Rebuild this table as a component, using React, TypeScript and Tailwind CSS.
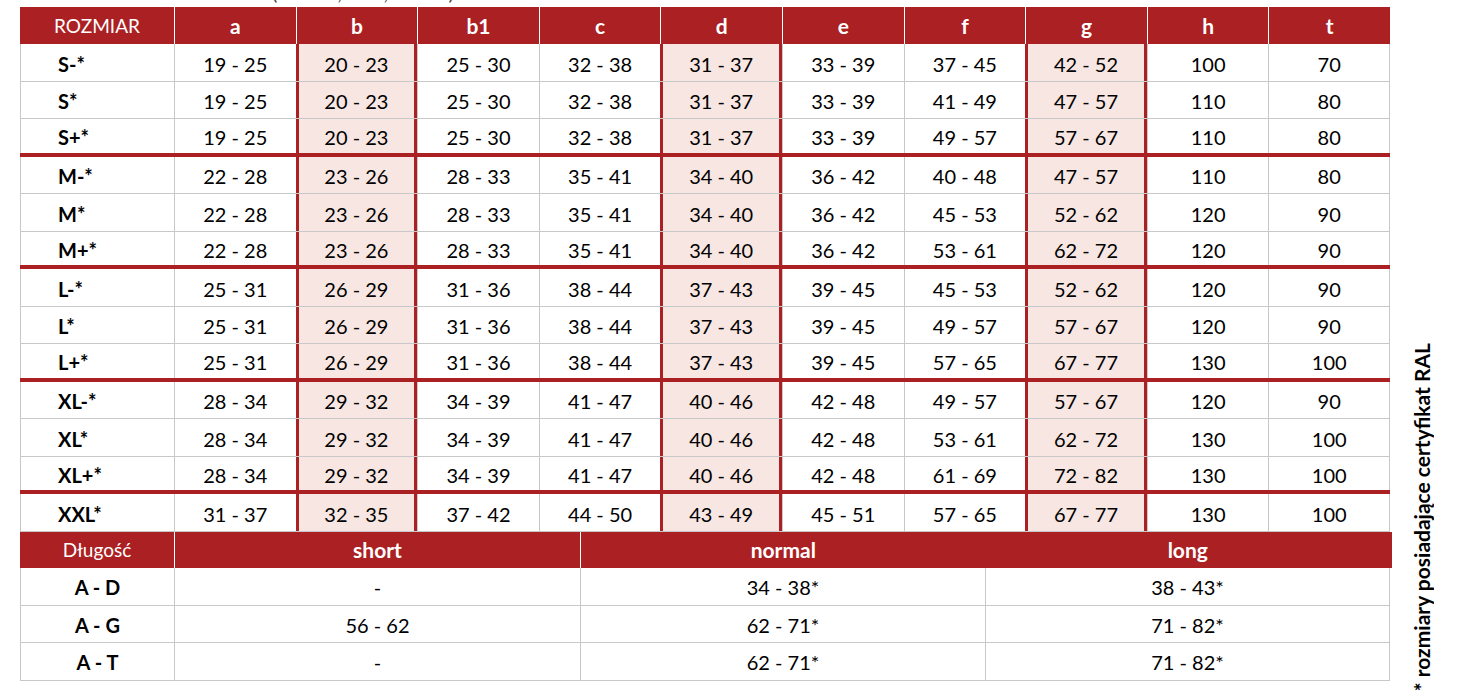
import React from 'react';

const rows: { label: string; v: string[]; end?: boolean }[] = [
  { label: 'S-*', v: ['19 - 25', '20 - 23', '25 - 30', '32 - 38', '31 - 37', '33 - 39', '37 - 45', '42 - 52', '100', '70'] },
  { label: 'S*', v: ['19 - 25', '20 - 23', '25 - 30', '32 - 38', '31 - 37', '33 - 39', '41 - 49', '47 - 57', '110', '80'] },
  { label: 'S+*', v: ['19 - 25', '20 - 23', '25 - 30', '32 - 38', '31 - 37', '33 - 39', '49 - 57', '57 - 67', '110', '80'], end: true },
  { label: 'M-*', v: ['22 - 28', '23 - 26', '28 - 33', '35 - 41', '34 - 40', '36 - 42', '40 - 48', '47 - 57', '110', '80'] },
  { label: 'M*', v: ['22 - 28', '23 - 26', '28 - 33', '35 - 41', '34 - 40', '36 - 42', '45 - 53', '52 - 62', '120', '90'] },
  { label: 'M+*', v: ['22 - 28', '23 - 26', '28 - 33', '35 - 41', '34 - 40', '36 - 42', '53 - 61', '62 - 72', '120', '90'], end: true },
  { label: 'L-*', v: ['25 - 31', '26 - 29', '31 - 36', '38 - 44', '37 - 43', '39 - 45', '45 - 53', '52 - 62', '120', '90'] },
  { label: 'L*', v: ['25 - 31', '26 - 29', '31 - 36', '38 - 44', '37 - 43', '39 - 45', '49 - 57', '57 - 67', '120', '90'] },
  { label: 'L+*', v: ['25 - 31', '26 - 29', '31 - 36', '38 - 44', '37 - 43', '39 - 45', '57 - 65', '67 - 77', '130', '100'], end: true },
  { label: 'XL-*', v: ['28 - 34', '29 - 32', '34 - 39', '41 - 47', '40 - 46', '42 - 48', '49 - 57', '57 - 67', '120', '90'] },
  { label: 'XL*', v: ['28 - 34', '29 - 32', '34 - 39', '41 - 47', '40 - 46', '42 - 48', '53 - 61', '62 - 72', '130', '100'] },
  { label: 'XL+*', v: ['28 - 34', '29 - 32', '34 - 39', '41 - 47', '40 - 46', '42 - 48', '61 - 69', '72 - 82', '130', '100'], end: true },
  { label: 'XXL*', v: ['31 - 37', '32 - 35', '37 - 42', '44 - 50', '43 - 49', '45 - 51', '57 - 65', '67 - 77', '130', '100'] },
];

const heads = ['a', 'b', 'b1', 'c', 'd', 'e', 'f', 'g', 'h', 't'];
// columns b, d, g are framed in red
const marked = [1, 4, 7];

const lengths = [
  { label: 'A - D', v: ['-', '34 - 38*', '38 - 43*'] },
  { label: 'A - G', v: ['56 - 62', '62 - 71*', '71 - 82*'] },
  { label: 'A - T', v: ['-', '62 - 71*', '71 - 82*'] },
];

const cols = 'grid grid-cols-[154px_repeat(10,minmax(0,1fr))]';

export default function App() {
  return (
    <div className="w-[1462px] h-[698px] bg-white flex [font-family:Lato,sans-serif] text-black overflow-hidden">
      <div className="w-[1392px] pl-[20px] flex flex-col">
        {/* cut-off caption above the table */}
        <div className="h-[7px] overflow-hidden pl-[252px]">
          <div className="text-[20px] leading-[24px] -mt-[20px] text-[#444]">(obwód, talia, biodra)</div>
        </div>

        {/* size table header */}
        <div className={`${cols} w-[1370px] h-[37px] bg-[#ab2023] text-white`}>
          <div className="flex items-center justify-center pt-[1px] text-[19px]">ROZMIAR</div>
          {heads.map(h => (
            <div key={h} className="flex items-center justify-center pt-[1px] border-l border-white text-[21px] font-bold">
              {h}
            </div>
          ))}
        </div>

        {/* size rows */}
        {rows.map(r => (
          <div
            key={r.label}
            className={`${cols} w-[1370px] h-[37.5px] ${r.end ? 'border-b-4 border-[#ab2023]' : 'border-b border-[#c8c8c8]'}`}
          >
            <div className="flex items-center pt-[3px] pl-[37px] border-l border-[#c8c8c8] text-[20px] font-bold">{r.label}</div>
            {r.v.map((val, i) => (
              <div
                key={i}
                className={`flex items-center justify-center pt-[3px] text-[20px] ${
                  marked.includes(i)
                    ? 'bg-[#f7e6e2] border-x-[3px] border-[#ab2023]'
                    : 'border-l border-[#c8c8c8]'
                } ${i === 9 ? 'border-r' : ''}`}
              >
                {val}
              </div>
            ))}
          </div>
        ))}

        {/* length table */}
        <div className="grid grid-cols-[154px_406px_405px_405px] w-[1372px] h-[36px] bg-[#ab2023] text-white mt-[0.5px]">
          <div className="flex items-center justify-center text-[19px]">Długość</div>
          <div className="flex items-center justify-center border-l border-white text-[21px] font-bold">short</div>
          <div className="col-span-2 grid grid-cols-2 border-l border-white text-[21px] font-bold">
            <div className="flex items-center justify-center">normal</div>
            <div className="flex items-center justify-center">long</div>
          </div>
        </div>
        {lengths.map(r => (
          <div key={r.label} className="grid grid-cols-[154px_406px_405px_405px] w-[1370px] h-[37.5px] border-b border-[#c8c8c8]">
            <div className="flex items-center justify-center pt-[2px] border-l border-[#c8c8c8] text-[20px] font-bold">{r.label}</div>
            {r.v.map((val, i) => (
              <div key={i} className={`flex items-center justify-center pt-[2px] border-l border-[#c8c8c8] text-[20px] ${i === 2 ? 'border-r' : ''}`}>
                {val}
              </div>
            ))}
          </div>
        ))}
      </div>

      {/* vertical footnote */}
      <div className="flex-1 flex items-end pl-[18px] pb-[7px]">
        <div className="[writing-mode:vertical-rl] rotate-180 text-[21px] leading-[24px] font-bold whitespace-nowrap">
          * rozmiary posiadające certyfikat RAL
        </div>
      </div>
    </div>
  );
}
